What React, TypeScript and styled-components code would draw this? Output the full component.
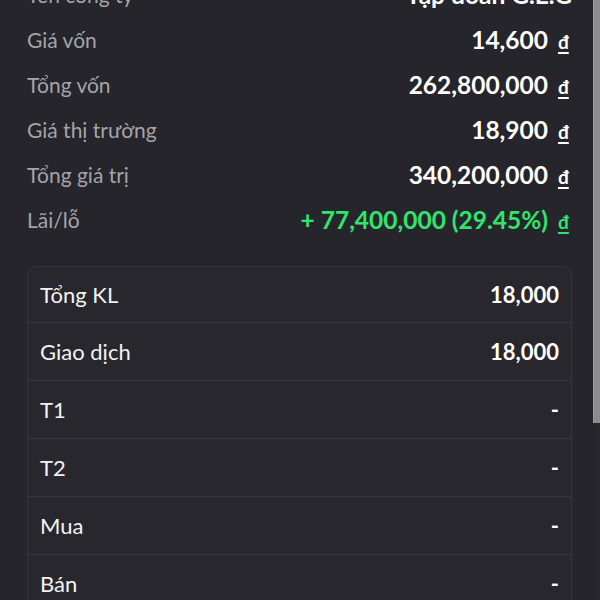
import React from "react";
import styled, { createGlobalStyle } from "styled-components";

const GlobalStyle = createGlobalStyle`
  html, body { margin: 0; padding: 0; background: #25252b; }
  body { font-family: Lato, "Noto Sans", sans-serif; }
`;

const Page = styled.div`
  height: 600px;
  display: flex;
  overflow: hidden;
  background: #25252b;
`;

const Content = styled.div`
  flex: 1;
  min-width: 0;
  padding: 0 21px 0 27px;
  display: flex;
  flex-direction: column;
  overflow: hidden;
`;

const ScrollTrack = styled.div`
  width: 7px;
  flex: none;
  background: #27272d;
  display: flex;
  flex-direction: column;
`;

const ScrollThumb = styled.div`
  height: 423px;
  background: #8b8b90;
  border-left: 1px solid #9a9a9f;
`;

const Summary = styled.div`
  display: flex;
  flex-direction: column;
  margin-top: -28px;
`;

const SummaryRow = styled.div`
  height: 45px;
  display: flex;
  align-items: center;
  justify-content: space-between;
`;

const Label = styled.span`
  color: #a4a4a9;
  font-size: 21px;
`;

const ValueWrap = styled.span<{ $tone?: "up" | "normal" }>`
  display: flex;
  align-items: baseline;
  color: ${(p) => (p.$tone === "up" ? "#30e56d" : "#ffffff")};
  font-weight: 700;
  font-size: 24.5px;
`;

const Currency = styled.span`
  font-size: 19px;
  font-weight: 700;
  text-decoration: underline;
  text-decoration-thickness: 2px;
  text-underline-offset: 3px;
  margin-left: 10px;
  width: 14px;
`;

const Card = styled.div`
  margin-top: 24px;
  border: 1px solid #35353b;
  border-radius: 9px;
  background: #27272d;
  display: flex;
  flex-direction: column;
`;

const CardRow = styled.div`
  height: 57px;
  padding: 0 12px;
  display: flex;
  align-items: center;
  justify-content: space-between;
  flex: none;
  & + & { border-top: 1px solid #35353b; }
  &:first-child { height: 55px; }
`;

const CardLabel = styled.span`
  color: #f2f2f4;
  font-size: 22px;
`;

const CardValue = styled.span`
  color: #ffffff;
  font-size: 22px;
  font-weight: 700;
`;

const summary: { label: string; value: string; tone?: "up" | "normal" }[] = [
  { label: "Tên công ty", value: "Tập đoàn G.E.G" },
  { label: "Giá vốn", value: "14,600" },
  { label: "Tổng vốn", value: "262,800,000" },
  { label: "Giá thị trường", value: "18,900" },
  { label: "Tổng giá trị", value: "340,200,000" },
  { label: "Lãi/lỗ", value: "+ 77,400,000 (29.45%)", tone: "up" },
];

const volumes = [
  { label: "Tổng KL", value: "18,000" },
  { label: "Giao dịch", value: "18,000" },
  { label: "T1", value: "-" },
  { label: "T2", value: "-" },
  { label: "Mua", value: "-" },
  { label: "Bán", value: "-" },
];

export default function App() {
  return (
    <>
      <GlobalStyle />
      <Page>
        <Content>
          <Summary>
            {summary.map((r, i) => (
              <SummaryRow key={r.label}>
                <Label>{r.label}</Label>
                <ValueWrap $tone={r.tone}>
                  {r.value}
                  {i > 0 && <Currency>đ</Currency>}
                </ValueWrap>
              </SummaryRow>
            ))}
          </Summary>
          <Card>
            {volumes.map((r) => (
              <CardRow key={r.label}>
                <CardLabel>{r.label}</CardLabel>
                <CardValue>{r.value}</CardValue>
              </CardRow>
            ))}
          </Card>
        </Content>
        <ScrollTrack>
          <ScrollThumb />
        </ScrollTrack>
      </Page>
    </>
  );
}
